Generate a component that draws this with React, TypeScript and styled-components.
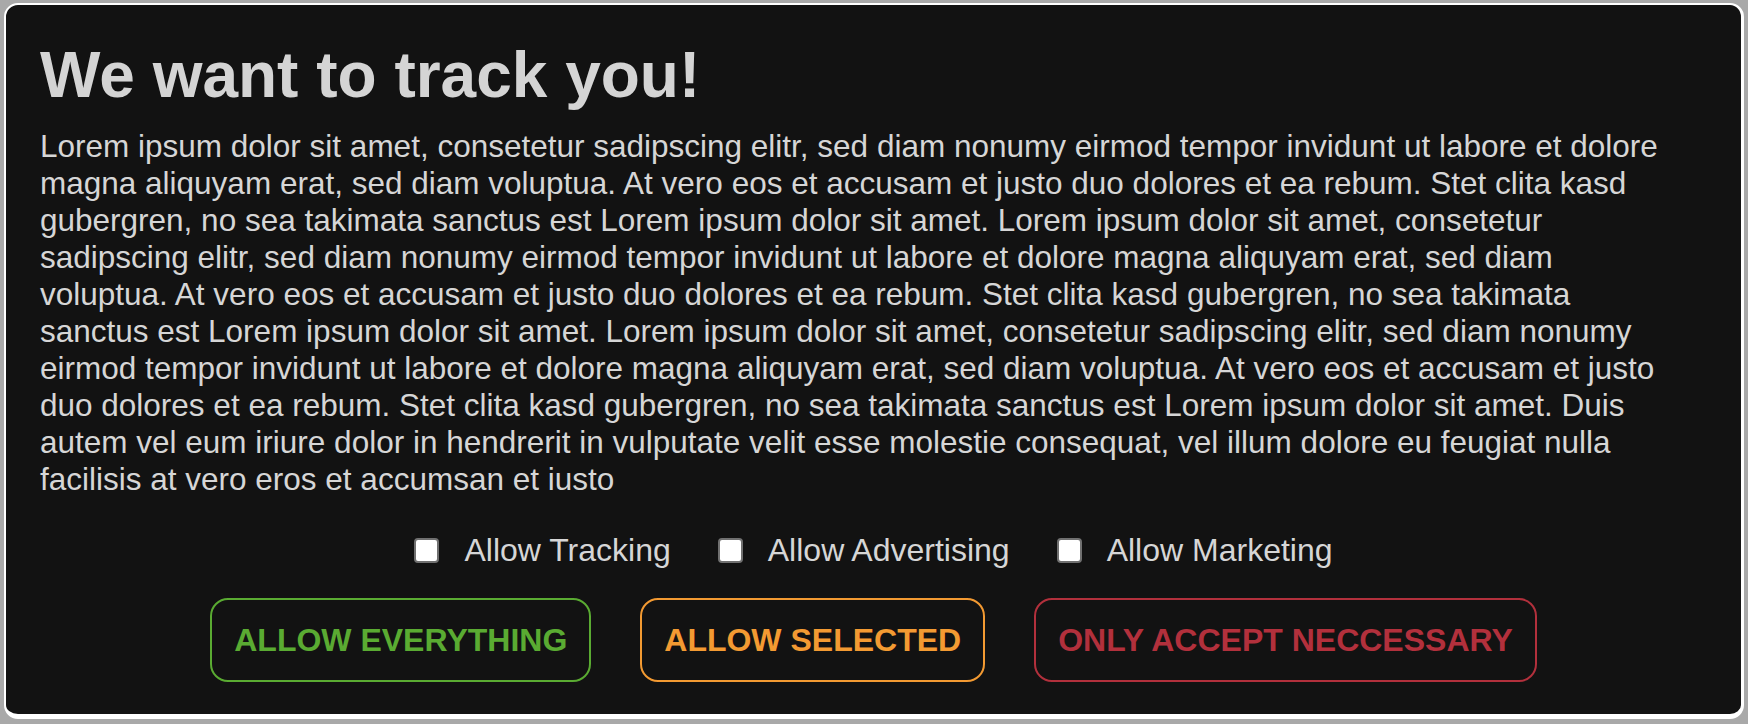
import React from "react";
import styled, { createGlobalStyle } from "styled-components";

const GlobalStyle = createGlobalStyle`
  html, body {
    margin: 0;
    padding: 0;
    background: #a9a9a9;
  }
  #root {
    box-sizing: border-box;
    height: 100vh;
    padding: 3px 4px 5px 4px;
    display: flex;
  }
`;

const Panel = styled.section`
  box-sizing: border-box;
  flex: 1;
  display: flex;
  flex-direction: column;
  background: #121212;
  border-style: solid;
  border-color: #ffffff;
  border-width: 2px 3px 5px 2px;
  border-radius: 14px;
  padding: 33px 34px 30px 34px;
  font-family: "Liberation Sans", Arial, Helvetica, sans-serif;
  color: #d6d6d6;
`;

const Title = styled.h1`
  margin: 0 0 16px 0;
  font-size: 64px;
  font-weight: 700;
  line-height: normal;
  color: #d4d4d4;
`;

const Body = styled.p`
  margin: 0 35px 0 0;
  font-size: 31.5px;
  line-height: 37px;
  color: #d6d6d6;
`;

const Options = styled.div`
  display: flex;
  justify-content: center;
  align-items: center;
  gap: 47px;
  margin-top: 34px;
`;

const Option = styled.label`
  display: flex;
  align-items: center;
  gap: 25px;
  font-size: 32px;
  line-height: normal;
  color: #d6d6d6;
  cursor: pointer;
`;

const Box = styled.input`
  appearance: none;
  -webkit-appearance: none;
  box-sizing: border-box;
  margin: 0;
  width: 25px;
  height: 25px;
  background: #ffffff;
  border: 2px solid #707070;
  border-radius: 4px;
  cursor: pointer;
`;

const Actions = styled.div`
  display: flex;
  justify-content: center;
  gap: 49px;
  margin-top: 29px;
`;

const ActionButton = styled.button<{ $tone: string }>`
  box-sizing: border-box;
  height: 84px;
  padding: 0 22px;
  background: transparent;
  border: 2px solid ${(p) => p.$tone};
  border-radius: 18px;
  color: ${(p) => p.$tone};
  font-family: "Liberation Sans", Arial, Helvetica, sans-serif;
  font-size: 32px;
  font-weight: 700;
  text-transform: uppercase;
  cursor: pointer;
`;

const text =
  "Lorem ipsum dolor sit amet, consetetur sadipscing elitr, sed diam nonumy eirmod tempor invidunt ut labore et dolore magna aliquyam erat, sed diam voluptua. At vero eos et accusam et justo duo dolores et ea rebum. Stet clita kasd gubergren, no sea takimata sanctus est Lorem ipsum dolor sit amet. Lorem ipsum dolor sit amet, consetetur sadipscing elitr, sed diam nonumy eirmod tempor invidunt ut labore et dolore magna aliquyam erat, sed diam voluptua. At vero eos et accusam et justo duo dolores et ea rebum. Stet clita kasd gubergren, no sea takimata sanctus est Lorem ipsum dolor sit amet. Lorem ipsum dolor sit amet, consetetur sadipscing elitr, sed diam nonumy eirmod tempor invidunt ut labore et dolore magna aliquyam erat, sed diam voluptua. At vero eos et accusam et justo duo dolores et ea rebum. Stet clita kasd gubergren, no sea takimata sanctus est Lorem ipsum dolor sit amet. Duis autem vel eum iriure dolor in hendrerit in vulputate velit esse molestie consequat, vel illum dolore eu feugiat nulla facilisis at vero eros et accumsan et iusto";

export default function App() {
  return (
    <>
      <GlobalStyle />
      <Panel>
        <Title>We want to track you!</Title>
        <Body>{text}</Body>
        <Options>
          <Option>
            <Box type="checkbox" />
            Allow Tracking
          </Option>
          <Option>
            <Box type="checkbox" />
            Allow Advertising
          </Option>
          <Option>
            <Box type="checkbox" />
            Allow Marketing
          </Option>
        </Options>
        <Actions>
          <ActionButton $tone="#5aab32">Allow Everything</ActionButton>
          <ActionButton $tone="#f39a32">Allow Selected</ActionButton>
          <ActionButton $tone="#b2303c">Only accept neccessary</ActionButton>
        </Actions>
      </Panel>
    </>
  );
}
